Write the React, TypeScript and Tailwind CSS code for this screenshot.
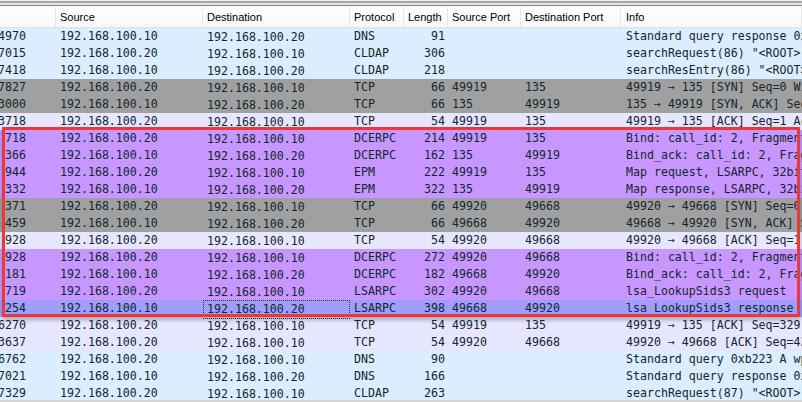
import React from "react";

type Row = {
  no: string;
  src: string;
  dst: string;
  proto: string;
  len: string;
  sport: string;
  dport: string;
  info: string;
  bg: string;
  sel?: boolean;
};

const UDP = "bg-[#daeeff]";
const SYN = "bg-[#a0a0a0]";
const TCP = "bg-[#e7e6ff]";
const RPC = "bg-[#c797ff]";
const SEL = "bg-[#a09dfb]";

const A = "192.168.100.10";
const B = "192.168.100.20";

const rows: Row[] = [
  { no: "4970", src: A, dst: B, proto: "DNS", len: "91", sport: "", dport: "", info: "Standard query response 0x2f1d A dc01.corp.local", bg: UDP },
  { no: "7015", src: B, dst: A, proto: "CLDAP", len: "306", sport: "", dport: "", info: 'searchRequest(86) "<ROOT>" baseObject', bg: UDP },
  { no: "7418", src: A, dst: B, proto: "CLDAP", len: "218", sport: "", dport: "", info: 'searchResEntry(86) "<ROOT>" searchResDone', bg: UDP },
  { no: "7827", src: B, dst: A, proto: "TCP", len: "66", sport: "49919", dport: "135", info: "49919 → 135 [SYN] Seq=0 Win=8192 Len=0", bg: SYN },
  { no: "3000", src: A, dst: B, proto: "TCP", len: "66", sport: "135", dport: "49919", info: "135 → 49919 [SYN, ACK] Seq=0 Ack=1", bg: SYN },
  { no: "3718", src: B, dst: A, proto: "TCP", len: "54", sport: "49919", dport: "135", info: "49919 → 135 [ACK] Seq=1 Ack=1 Win=65536", bg: TCP },
  { no: " 718", src: B, dst: A, proto: "DCERPC", len: "214", sport: "49919", dport: "135", info: "Bind: call_id: 2, Fragment: Single", bg: RPC },
  { no: " 366", src: A, dst: B, proto: "DCERPC", len: "162", sport: "135", dport: "49919", info: "Bind_ack: call_id: 2, Fragment: Single", bg: RPC },
  { no: " 944", src: B, dst: A, proto: "EPM", len: "222", sport: "49919", dport: "135", info: "Map request, LSARPC, 32bit NDR", bg: RPC },
  { no: " 332", src: A, dst: B, proto: "EPM", len: "322", sport: "135", dport: "49919", info: "Map response, LSARPC, 32bit NDR", bg: RPC },
  { no: " 371", src: B, dst: A, proto: "TCP", len: "66", sport: "49920", dport: "49668", info: "49920 → 49668 [SYN] Seq=0 Win=8192", bg: SYN },
  { no: " 459", src: A, dst: B, proto: "TCP", len: "66", sport: "49668", dport: "49920", info: "49668 → 49920 [SYN, ACK] Seq=0 Ack=1", bg: SYN },
  { no: " 928", src: B, dst: A, proto: "TCP", len: "54", sport: "49920", dport: "49668", info: "49920 → 49668 [ACK] Seq=1 Ack=1", bg: TCP },
  { no: " 928", src: B, dst: A, proto: "DCERPC", len: "272", sport: "49920", dport: "49668", info: "Bind: call_id: 2, Fragment: Single", bg: RPC },
  { no: " 181", src: A, dst: B, proto: "DCERPC", len: "182", sport: "49668", dport: "49920", info: "Bind_ack: call_id: 2, Fragment: Single", bg: RPC },
  { no: " 719", src: B, dst: A, proto: "LSARPC", len: "302", sport: "49920", dport: "49668", info: "lsa_LookupSids3 request", bg: RPC },
  { no: " 254", src: A, dst: B, proto: "LSARPC", len: "398", sport: "49668", dport: "49920", info: "lsa_LookupSids3 response", bg: SEL, sel: true },
  { no: "6270", src: B, dst: A, proto: "TCP", len: "54", sport: "49919", dport: "135", info: "49919 → 135 [ACK] Seq=329 Ack=253", bg: TCP },
  { no: "3637", src: B, dst: A, proto: "TCP", len: "54", sport: "49920", dport: "49668", info: "49920 → 49668 [ACK] Seq=435 Ack=389", bg: TCP },
  { no: "6762", src: B, dst: A, proto: "DNS", len: "90", sport: "", dport: "", info: "Standard query 0xb223 A wpad.corp.local", bg: UDP },
  { no: "7021", src: A, dst: B, proto: "DNS", len: "166", sport: "", dport: "", info: "Standard query response 0xb223 No such name", bg: UDP },
  { no: "7329", src: B, dst: A, proto: "CLDAP", len: "263", sport: "", dport: "", info: 'searchRequest(87) "<ROOT>" baseObject', bg: UDP },
];

const grid = "grid grid-cols-[56px_147px_147px_54px_44px_73px_100px_181px]";

const headers = ["", "Source", "Destination", "Protocol", "Length", "Source Port", "Destination Port", "Info"];

export default function App() {
  return (
    <div className="relative h-[402px] w-[802px] overflow-hidden bg-white">
      {/* toolbar edge */}
      <div className="h-px bg-[#f2f2f2]" />
      <div className="h-[2px] bg-[#a8a8a8]" />
      <div className="h-[2px] bg-[#e4e4e4]" />
      <div className="h-px bg-[#8c8c8c]" />
      <div className="h-px bg-[#f4f4f4]" />

      <div
        className={`${grid} h-[21px] border-b border-[#e2e2e2] bg-gradient-to-b from-white to-[#f7f7f7] text-[11px] text-black`}
        style={{ fontFamily: '"Liberation Sans", Arial, sans-serif' }}
      >
        {headers.map((h, i) => (
          <div
            key={i}
            className={`flex items-center overflow-hidden whitespace-nowrap border-r border-[#e5e5e5] ${
              i === 7 ? "pl-[5px]" : "pl-[4px]"
            }`}
          >
            {h}
          </div>
        ))}
      </div>

      <div
        className="text-[11.6px] text-[#12272e]"
        style={{ fontFamily: '"DejaVu Sans Mono", "Liberation Mono", monospace' }}
      >
        {rows.map((r, i) => (
          <div key={i} className={`${grid} h-[17px] leading-[17px] ${r.bg}`}>
            <div className="-ml-[2px] overflow-hidden whitespace-pre">{r.no}</div>
            <div className="pl-[4px] whitespace-pre">{r.src}</div>
            <div
              className={`pl-[3px] whitespace-pre ${
                r.sel ? "border border-dotted border-[#333]" : "border border-transparent"
              }`}
            >
              {r.dst}
            </div>
            <div className="pl-[4px] whitespace-pre">{r.proto}</div>
            <div className="pr-[3px] text-right whitespace-pre">{r.len}</div>
            <div className="pl-[4px] whitespace-pre">{r.sport}</div>
            <div className="pl-[4px] whitespace-pre">{r.dport}</div>
            <div className="overflow-hidden whitespace-pre pl-[5px]">{r.info}</div>
          </div>
        ))}
      </div>

      {/* highlight box */}
      <div className="pointer-events-none absolute left-[2px] top-[127px] h-[190px] w-[798px] border-[3px] border-[#ec3838] shadow-[0_3px_4px_rgba(0,0,0,0.25)]" />

      <div className="absolute bottom-0 left-0 h-[2px] w-full bg-[#d6d6d6]" />
    </div>
  );
}
